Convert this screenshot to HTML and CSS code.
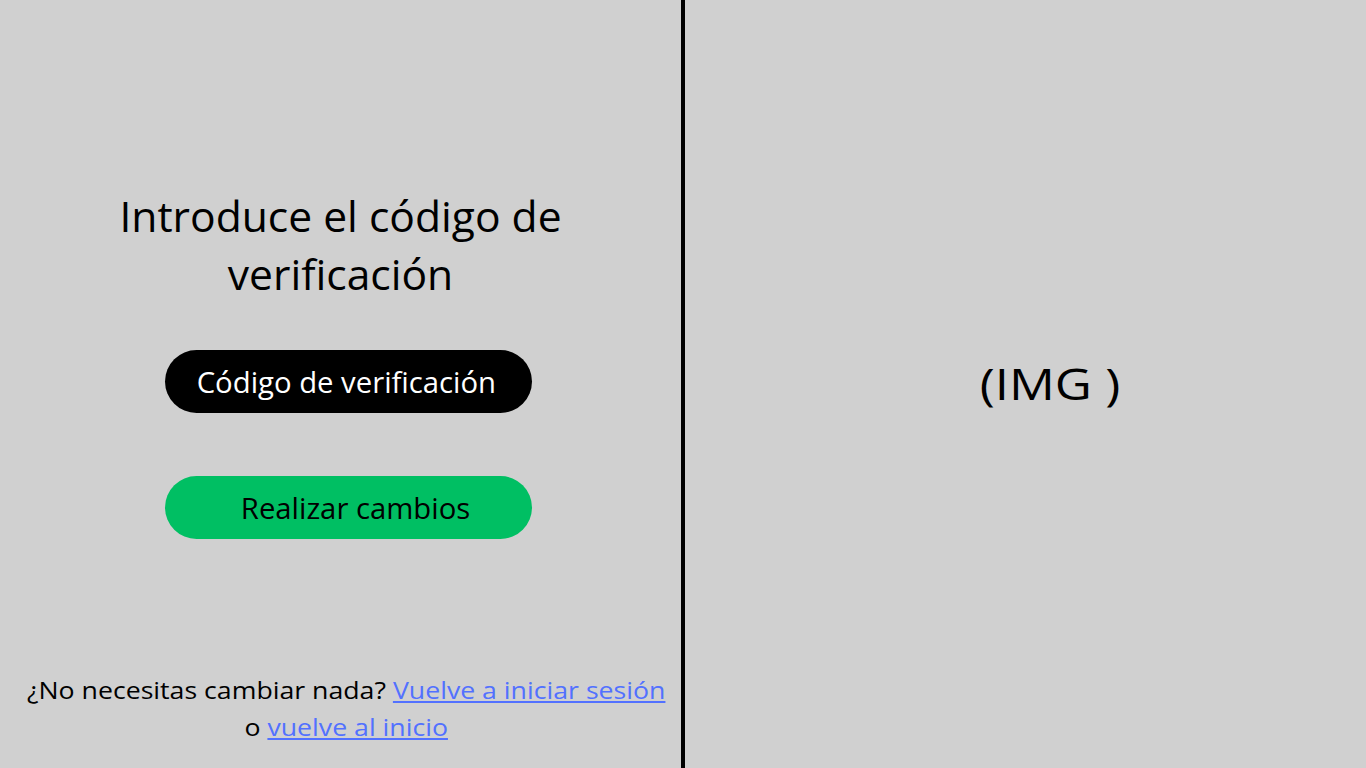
FILE: index.html
```html
<!DOCTYPE html>
<html lang="es">
<head>
<meta charset="utf-8">
<title>Código de verificación</title>
<link rel="stylesheet" href="styles.css">
</head>
<body>
<div class="page">
  <section class="left">
    <h1 class="title">Introduce el código de verificación</h1>
    <div class="pill pill-dark"><span class="pill-text">Código de verificación</span></div>
    <div class="pill pill-green"><span class="pill-text">Realizar cambios</span></div>
    <p class="footer">¿No necesitas cambiar nada? <a href="#">Vuelve a iniciar sesión</a><br>o <a href="#">vuelve al inicio</a></p>
  </section>
  <div class="divider"></div>
  <section class="right">
    <div class="img-label">(IMG )</div>
  </section>
</div>
</body>
</html>
```
FILE: styles.css
```css
html, body {
  margin: 0;
  padding: 0;
  height: 100%;
}
body {
  background: #d0d0d0;
  font-family: "Open Sans", "Noto Sans", sans-serif;
  color: #000;
}
.page {
  display: flex;
  height: 768px;
}
.left {
  width: 681px;
  display: flex;
  flex-direction: column;
  align-items: center;
}
.divider {
  width: 4px;
  background: #000;
}
.right {
  flex: 1;
  display: flex;
  align-items: center;
  justify-content: center;
}
.title {
  margin: 186px 0 0;
  width: 490px;
  font-size: 42.6px;
  font-weight: 400;
  line-height: 58px;
  text-align: center;
}
.pill {
  width: 367px;
  height: 63px;
  border-radius: 32px;
  display: flex;
  align-items: center;
  justify-content: center;
  font-size: 30px;
  box-sizing: border-box;
}
.pill-text {
  display: inline-block;
  transform: scaleX(0.976);
}
.pill-dark {
  margin-top: 48px;
  margin-left: 15px;
  background: #000;
  color: #fff;
  padding-right: 4px;
}
.pill-green {
  margin-top: 63px;
  margin-left: 15px;
  background: #00bf63;
  color: #000;
  padding-left: 15px;
}
.footer {
  margin: auto 0 0;
  padding-bottom: 22px;
  font-size: 23px;
  line-height: 37px;
  text-align: center;
  transform: translateX(6px) scaleX(1.16);
}
.footer a {
  color: #5271ff;
  text-decoration: underline;
}
.img-label {
  font-size: 44px;
  padding-left: 42px;
  padding-bottom: 2px;
  transform: scaleX(1.16);
}
```
